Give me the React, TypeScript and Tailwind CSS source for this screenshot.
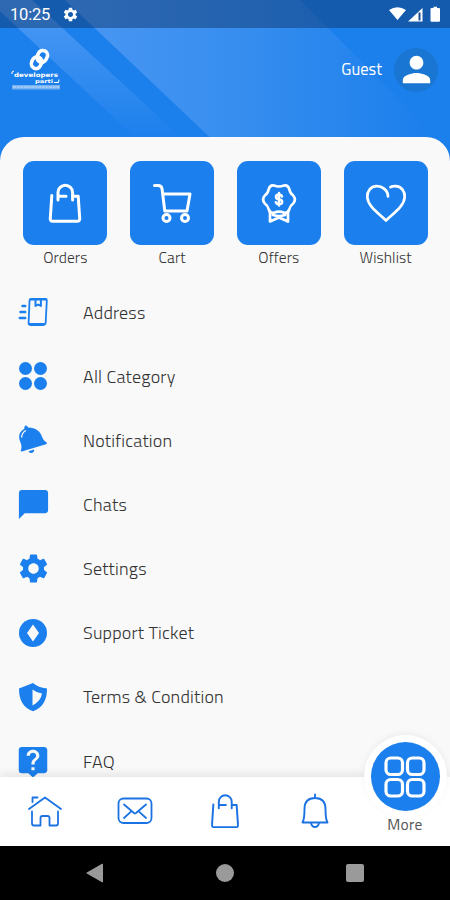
import type { ReactNode } from "react";
import { MdChatBubble, MdLiveHelp, MdPerson, MdSettings } from "react-icons/md";

const line = {
  fill: "none",
  stroke: "currentColor",
  strokeLinecap: "round",
  strokeLinejoin: "round",
} as const;

function BagIcon({ className, width }: { className?: string; width: number }) {
  return (
    <svg viewBox="0 0 34 40" className={className} {...line} strokeWidth={width}>
      <path d="M3.800 12.500 2.300 35.500Q2 38.300 4.800 38.300H29.200Q32 38.300 31.700 35.500L30.200 13.200H25.500" />
      <path d="M10 17V9.500a7.300 7.300 0 0 1 14.600 0V17M10.500 13.200h7.500" />
    </svg>
  );
}

function CartIcon() {
  return (
    <svg viewBox="0 0 40 40" className="size-10" {...line} strokeWidth="3">
      <path d="M2.500 2.500H6q3.300 0 4 3L12.800 28H35L38 11H11" />
      <circle cx="14.500" cy="35" r="3.500" />
      <circle cx="33" cy="35" r="3.500" />
    </svg>
  );
}

function OfferIcon() {
  return (
    <svg viewBox="0 0 36 40" className="h-10 w-9" {...line} strokeWidth="2.700">
      <path d="M13 2.500Q18 4.500 23 2.500q4-.8 5.200 3.500.8 4.200 4 6.500 3.400 4 0 8-3.200 2.200-4 6-1.200 4-5.200 3.200-5-2-10 0-4 .8-5.200-3.200-.8-3.800-4-6-3.400-4 0-8 3.200-2.300 4-6.500Q9 1.700 13 2.500Z" />
      <path d="M9 29v9.500l9-4 9 4V29M12 32q6 2 12 0" />
      <path d="M21 13.500q-.8-2-3-2-3 0-3 2.300T18 16.300q3.200.4 3.200 2.700T18 21.200q-2.600 0-3.200-2M18 10v12.500" strokeWidth="2.500" />
    </svg>
  );
}

function HeartIcon() {
  return (
    <svg viewBox="0 0 42 42" className="size-[42px]" {...line} strokeWidth="2.700">
      <path d="M23 14.500C23 8 17 4 11.500 4.200 5.500 4.500 2 9.500 2.300 15c.6 9.500 11 16 18.700 23.500C28.700 31 39.100 24.500 39.700 15 40 9.500 36.500 4.500 30.500 4.200q-2.800-.1-5 .9" />
    </svg>
  );
}

function AddressIcon() {
  return (
    <svg viewBox="0 0 30 30" className="size-[30px]" {...line} strokeWidth="1.800">
      <path d="M13.500 1.800h13.500Q29 1.800 28.800 3.800L27.700 25.500q-.2 2.500-2.700 2.500H12.500q-2 0-1.900-2L11.500 4Q11.600 1.800 13.500 1.800Z" />
      <path d="M11.500 27.200H26M12.500 2.300h15.500" strokeWidth="2.200" />
      <path d="M17.500 2.500V9l2.700-1.500L22.900 9V2.500" strokeWidth="2" />
      <path d="M4.500 9H7.200M2.500 15h4.700M1.800 21h5.400" strokeWidth="2.500" />
    </svg>
  );
}

function CategoryIcon() {
  return (
    <div className="grid grid-cols-2 gap-[2.500px]">
      <span className="size-[13px] rounded-full bg-current" />
      <span className="size-[13px] rounded-full bg-current" />
      <span className="size-[13px] rounded-full bg-current" />
      <span className="size-[13px] rounded-full bg-current" />
    </div>
  );
}

function BellSolidIcon() {
  return (
    <svg viewBox="0 0 30 30" className="size-[30px]">
      <path
        fill="currentColor"
        d="M6.500 1.600Q8-.3 9.500 1.400L10 2.500C17 2.300 22.500 6 24.300 12.500q.8 3 4.300 5 .9 1-.6 1.700L3.800 26.500q-1.400.2-1-1.300 1.500-3.400-.3-7.700C-.2 11 1.200 7 6.300 3.800ZM10.500 26.200l5.500-1.700q.8 2.400-1.600 3.300-2.500.9-3.900-1.600Z"
      />
      <path d="M3.700 12q.1-4 3.800-6.200" fill="none" stroke="#f9f9f9" strokeWidth="1.300" strokeLinecap="round" />
    </svg>
  );
}

function TicketIcon() {
  return (
    <svg viewBox="0 0 28 28" className="size-7">
      <circle cx="14" cy="14" r="14" fill="currentColor" />
      <path d="M14 5.500 20 14l-6 8.500L8 14Z" fill="#f9f9f9" />
    </svg>
  );
}

function ShieldIcon() {
  return (
    <svg viewBox="0 0 30 30" className="size-[30px]">
      <path d="M15 1Q20 5.500 29 6.500C29 18 25 25.500 15 29.200 5 25.500 1 18 1 6.500 10 5.500 15 1Z" fill="currentColor" />
      <path d="M14.500 7.500Q18.500 10.800 24 11.500 23 19 14.500 23.500Z" fill="#f9f9f9" />
    </svg>
  );
}

function HomeIcon() {
  return (
    <svg viewBox="0 0 36 34" className="h-[34px] w-9" {...line} strokeWidth="1.800">
      <path d="M2 15 18 3.500 34 15M5.500 8V3.500h5" />
      <path d="M5 17.500v12Q5 31.500 7 31.500h6.500V24q0-2 2-2h5q2 0 2 2v7.500H29q2 0 2-2v-12" />
    </svg>
  );
}

function MailIcon() {
  return (
    <svg viewBox="0 0 36 28" className="h-7 w-9" {...line} strokeWidth="1.800">
      <rect x="1.500" y="1.500" width="33" height="24.500" rx="5" />
      <path d="m7 7.500 10 8.500q1 .8 2 0l10-8.500M7 21l7-6.300M29 21l-7-6.300" />
    </svg>
  );
}

function BellIcon() {
  return (
    <svg viewBox="0 0 30 38" className="h-[38px] w-[30px]" {...line} strokeWidth="1.900">
      <path d="M15 2.500v3.500M2.500 30.500H27.500Q25.500 27 25.500 17 25.500 6 15 6T4.500 17q0 10-2 13.500ZM11 31q.8 4 4 4t4-4" />
    </svg>
  );
}

function MoreIcon() {
  return (
    <svg viewBox="0 0 42 42" className="mr-px size-[42px]" {...line} strokeWidth="3.200">
      <rect x="2" y="2" width="16.500" height="16.500" rx="4.800" />
      <rect x="23.500" y="2" width="16.500" height="16.500" rx="4.800" />
      <rect x="2" y="23.500" width="16.500" height="16.500" rx="4.800" />
      <rect x="23.500" y="23.500" width="16.500" height="16.500" rx="4.800" />
    </svg>
  );
}

function Logo() {
  return (
    <svg viewBox="0 0 50 44" className="h-11 w-[50px] shrink-0 text-white">
      <g fill="none" stroke="currentColor" strokeWidth="3.600">
        <rect x="20.700" y="8.700" width="9.500" height="12" rx="4.750" transform="rotate(25 25.500 15)" />
        <rect x="26.500" y="2.500" width="9.500" height="12" rx="4.750" transform="rotate(25 31.500 8.500)" />
      </g>
      <g fill="currentColor" fontFamily="'DejaVu Sans', sans-serif" fontWeight="bold">
        <text x="3" y="28.500" fontSize="6" textLength="44" lengthAdjust="spacingAndGlyphs">developers</text>
        <text x="24" y="34.500" fontSize="5" textLength="18" lengthAdjust="spacingAndGlyphs">parti</text>
      </g>
      <path d="M1 26v-2l2-1M43 34.500h4.500l.5-3" fill="none" stroke="currentColor" />
      <rect x="1" y="37" width="48" height="4.500" fill="currentColor" opacity=".4" />
      <path d="M2 39h46" stroke="currentColor" strokeDasharray="3 .6" opacity=".6" />
    </svg>
  );
}

function HeaderArt() {
  return (
    <svg viewBox="0 0 450 165" className="absolute inset-0 h-[165px] w-full">
      <defs>
        <linearGradient id="band" x1="0" y1="0" x2="0" y2="1">
          <stop offset="0" stopColor="#4d9af4" />
          <stop offset="1" stopColor="#1b7fec" />
        </linearGradient>
        <linearGradient id="wide" x1="80" y1="0" x2="430" y2="0" gradientUnits="userSpaceOnUse">
          <stop offset="0" stopColor="#4896f3" />
          <stop offset=".45" stopColor="#378eef" />
          <stop offset="1" stopColor="#1b7fec" />
        </linearGradient>
      </defs>
      <path d="M0 0H450V165H0Z" fill="#1b7fec" />
      <path d="M-12 0H32L186 142H140Z" fill="url(#band)" />
      <path d="M65 0H300L450 150V165H239Z" fill="url(#wide)" />
    </svg>
  );
}

function StatusBar() {
  return (
    <div className="flex h-7 items-center bg-[#0d2f62]/45 pr-2 pl-2.5 text-white">
      <span className="pt-0.5 font-[Roboto] text-[16.500px] leading-none tracking-[-0.2px]">10:25</span>
      <MdSettings className="mt-px ml-3 size-[17px]" />
      <svg viewBox="0 0 53 18" className="ml-auto h-[18px] w-[53px]" fill="currentColor">
        <path d="M0 5Q8.500-.5 17 5l-8.500 10ZM33.500 3v13.500H19Z" />
        <path d="M29.500 7.500h2v8h-2Z" fill="#194c95" />
        <path d="M42.500 3h2V1.700h3.500V3h2q1 0 1 1v11.700q0 1-1 1h-7.500q-1 0-1-1V4q0-1 1-1Z" />
      </svg>
    </div>
  );
}

const shortcuts: { label: string; icon: ReactNode }[] = [
  { label: "Orders", icon: <BagIcon className="h-10 w-[34px]" width={3} /> },
  { label: "Cart", icon: <CartIcon /> },
  { label: "Offers", icon: <OfferIcon /> },
  { label: "Wishlist", icon: <HeartIcon /> },
];

const menu: { label: string; icon: ReactNode }[] = [
  { label: "Address", icon: <AddressIcon /> },
  { label: "All Category", icon: <CategoryIcon /> },
  { label: "Notification", icon: <BellSolidIcon /> },
  { label: "Chats", icon: <MdChatBubble className="size-[35px] shrink-0" /> },
  { label: "Settings", icon: <MdSettings className="size-[35px] shrink-0" /> },
  { label: "Support Ticket", icon: <TicketIcon /> },
  { label: "Terms & Condition", icon: <ShieldIcon /> },
  { label: "FAQ", icon: <MdLiveHelp className="h-[35px] w-[38px] shrink-0" preserveAspectRatio="none" /> },
];

const tabs: { label: string; icon: ReactNode }[] = [
  { label: "Home", icon: <HomeIcon /> },
  { label: "Inbox", icon: <MailIcon /> },
  { label: "Orders", icon: <BagIcon className="h-9 w-[30px]" width={2.2} /> },
  { label: "Notification", icon: <BellIcon /> },
];

export default function App() {
  return (
    <div className="flex h-[900px] w-[450px] flex-col overflow-hidden bg-[#f9f9f9] font-['Titillium_Web',Roboto,sans-serif]">
      <header className="relative h-[165px] shrink-0">
        <HeaderArt />
        <div className="relative">
          <StatusBar />
          <div className="flex h-[83px] items-center pr-3 pl-[11px]">
            <Logo />
            <span className="ml-auto text-[16.500px] text-white">Guest</span>
            <span className="ml-3 flex size-11 items-center justify-center rounded-full bg-[#1976d2]">
              <MdPerson className="size-[41px] text-white" />
            </span>
          </div>
        </div>
      </header>

      <main className="relative -mt-7 flex min-h-0 flex-1 flex-col overflow-hidden rounded-t-[24px] bg-[#f9f9f9]">
        <div className="grid grid-cols-4 pt-6 pr-[11px] pl-3">
          {shortcuts.map((s) => (
            <div key={s.label} className="flex flex-col items-center">
              <span className="flex size-[84px] items-center justify-center rounded-[11px] bg-[#1b7fed] text-white">
                {s.icon}
              </span>
              <span className="mt-px text-[15.500px] leading-[22px] font-light tracking-[0.1px] text-[#333]">{s.label}</span>
            </div>
          ))}
        </div>
        <ul className="mt-3">
          {menu.map((item) => (
            <li key={item.label} className="flex h-[64.15px] items-center">
              <span className="ml-[18px] flex w-[30px] items-center justify-center text-[#1b7fed]">{item.icon}</span>
              <span className="ml-[35px] text-[18px] font-light tracking-[0.2px] text-[#333]">{item.label}</span>
            </li>
          ))}
        </ul>
      </main>

      <nav className="relative grid h-[69px] shrink-0 grid-cols-5 bg-white shadow-[0_-2px_10px_rgba(0,0,0,0.1)]">
        {tabs.map((tab) => (
          <button key={tab.label} aria-label={tab.label} className="flex items-center justify-center pb-0.5 text-[#1b73e3]">
            {tab.icon}
          </button>
        ))}
        <div className="flex flex-col items-center justify-end pb-[11px]">
          <span className="absolute -top-[42px] right-[3px] size-[83px] rounded-full bg-white shadow-[0_-2px_7px_rgba(0,0,0,0.05)]" />
          <span className="absolute -top-[35px] right-2.5 flex size-[69px] items-center justify-center rounded-full bg-[#1b7fed] text-white">
            <MoreIcon />
          </span>
          <span className="relative text-[15.500px] leading-[22px] tracking-[0.3px] text-[#555]">More</span>
        </div>
      </nav>

      <footer className="flex h-[54px] shrink-0 items-center justify-between bg-black px-[86px] text-[#9a9a9a]">
        <svg viewBox="0 0 17 20" className="h-5 w-[17px]" fill="currentColor">
          <path d="M16 .8Q17 .3 17 1.500v17q0 1.200-1 .7L.8 10.600q-1-.6 0-1.200Z" />
        </svg>
        <span className="size-[18px] rounded-full bg-current" />
        <span className="size-[18px] rounded-xs bg-current" />
      </footer>
    </div>
  );
}
